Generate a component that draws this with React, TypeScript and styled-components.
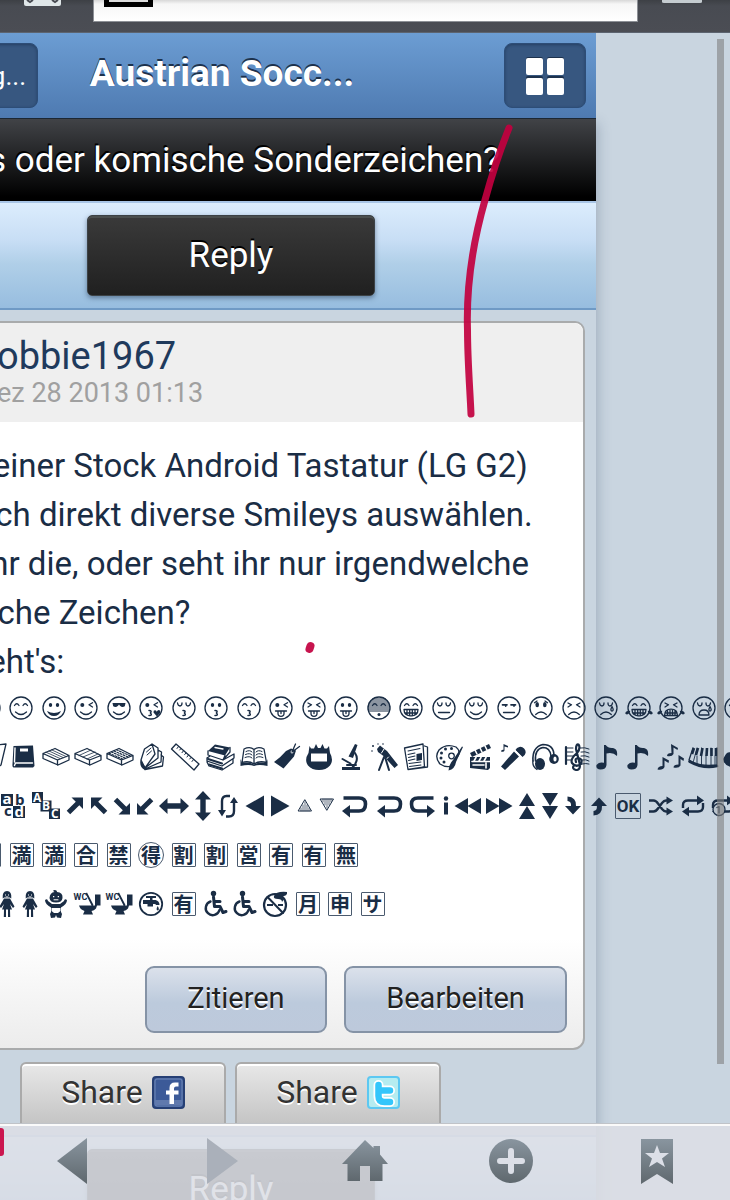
import React from 'react';
import styled, { createGlobalStyle } from 'styled-components';

const INK = '#1a2d45';

const Global = createGlobalStyle`
  * { box-sizing: border-box; }
  body { margin: 0; background: #c9d5e0; font-family: Roboto, "Noto Sans CJK JP", sans-serif; }
  button { font-family: inherit; cursor: pointer; }
`;

const Screen = styled.div`
  position: relative;
  height: 100vh;
  overflow: hidden;
  background: #c9d5e0;
`;

const BrowserBar = styled.div`
  display: flex;
  align-items: flex-start;
  height: 33px;
  padding: 0 28px 0 24px;
  background: linear-gradient(#3d4045, #484b52 6px, #4b4d54);
  border-bottom: 1px solid #5c6470;
`;

const BarGlyph = styled.svg`
  flex: none;
  display: block;
`;

const Address = styled.div`
  flex: 1;
  height: 22px;
  margin: 0 18px 0 32px;
  padding-left: 10px;
  background: linear-gradient(#d8d8d8, #f6f6f6 4px, #fff);
  border: 1px solid #8d9096;
  border-top: 0;
`;

const Forum = styled.main`
  margin-left: -134px;
  margin-right: 134px;
  box-shadow: 2px 90px 12px rgba(40, 60, 90, 0.25);
`;

const Header = styled.header`
  display: flex;
  align-items: flex-start;
  justify-content: space-between;
  height: 86px;
  padding: 10px 10px 0 0;
  background: linear-gradient(#6c9dd3, #4e7ab1);
  border-bottom: 1px solid #1c2733;
`;

const HeaderButton = styled.button<{ $width: number }>`
  display: flex;
  align-items: center;
  justify-content: flex-end;
  width: ${(p) => p.$width}px;
  height: 65px;
  padding: 0 11px 0 0;
  font-size: 26px;
  color: #fff;
  background: #375780;
  border: 1px solid #2d4d77;
  border-radius: 8px;
  box-shadow: inset 0 1px 3px rgba(15, 35, 65, 0.45);
`;

const GridButton = styled(HeaderButton)`
  justify-content: center;
  padding: 0;
`;

const Title = styled.h1`
  margin: 0 98px 0 0;
  font-size: 37px;
  line-height: 62px;
  font-weight: 700;
  color: #fff;
  text-shadow: 0 -2px 0 #1d324d;
`;

const Topic = styled.h2`
  margin: 0;
  padding: 2px 0 0 122px;
  height: 82px;
  font-size: 35px;
  line-height: 80px;
  font-weight: 400;
  color: #fff;
  white-space: nowrap;
  text-shadow: -1px -2px 0 #000;
  background: linear-gradient(#414347, #000 95%);
`;

const Strip = styled.div`
  display: flex;
  justify-content: center;
  height: 109px;
  padding-top: 12px;
  background: linear-gradient(#dcedfd, #c8def5 35%, #b0cfe8 58%, #97bddf);
  border-top: 2px solid #a8c5e6;
  border-bottom: 2px solid #6f9ac5;
`;

const ReplyButton = styled.button`
  width: 288px;
  height: 81px;
  padding: 0;
  font-size: 35px;
  color: #fff;
  text-shadow: 0 -2px 0 #000;
  background: linear-gradient(#3a3a3a, #202020);
  border: 1px solid #3c4246;
  border-radius: 5px;
  box-shadow: inset 0 2px 0 #4b4f4e, 0 2px 5px rgba(30, 50, 80, 0.5);
`;

const Post = styled.article`
  margin: 11px 11px 0 12px;
  border: 2px solid #a9abac;
  border-radius: 10px 10px 12px 10px;
  background: linear-gradient(#fff, #fff 85%, #ececec);
`;

const PostHead = styled.div`
  height: 99px;
  padding: 11px 0 0 117px;
  background: #efefef;
  border-radius: 9px 9px 0 0;
`;

const Author = styled.div`
  font-size: 38px;
  line-height: 44px;
  color: #1f3a5c;
`;

const PostDate = styled.div`
  font-size: 27px;
  line-height: 30px;
  color: #a0a0a0;
`;

const PostBody = styled.div`
  padding: 19px 0 0 28px;
  color: ${INK};
`;

const Line = styled.div`
  font-size: 33px;
  line-height: 49px;
  white-space: nowrap;
`;

const IconRow = styled.div<{ $start: number }>`
  display: flex;
  align-items: center;
  height: 49px;
  padding-bottom: 5px;
  margin-left: ${(p) => p.$start}px;
`;

const Cell = styled.span<{ $width: number }>`
  display: flex;
  flex: none;
  align-items: center;
  justify-content: center;
  width: ${(p) => p.$width}px;
`;

const Glyph = styled.svg`
  display: block;
  flex: none;
  width: 32px;
  height: 32px;
  overflow: visible;
`;

const Tile = styled.span<{ $round?: boolean }>`
  display: flex;
  flex: none;
  align-items: center;
  justify-content: center;
  width: ${(p) => (p.$round ? 26 : 24)}px;
  height: ${(p) => (p.$round ? 26 : 24)}px;
  border: 1px solid #4a5a6e;
  border-radius: ${(p) => (p.$round ? '50%' : '1px')};
  font-family: "Noto Sans CJK JP", sans-serif;
  font-size: 20px;
  line-height: 22px;
  font-weight: 700;
`;

const OkTile = styled(Tile)`
  width: 26px;
  height: 26px;
  font-family: Roboto, sans-serif;
  font-size: 17px;
`;

const Actions = styled.div`
  display: flex;
  justify-content: flex-end;
  gap: 17px;
  padding: 35px 16px 15px 0;
`;

const ActionButton = styled.button<{ $width: number }>`
  width: ${(p) => p.$width}px;
  height: 67px;
  padding: 0 0 3px;
  font-size: 29px;
  color: #222;
  text-shadow: 0 2px 0 #fff;
  background: linear-gradient(#dbe1eb, #bccadc 55%, #bdc9db);
  border: 2px solid #8593a6;
  border-radius: 9px;
`;

const Shares = styled.div`
  display: flex;
  justify-content: center;
  gap: 9px;
  padding: 12px 1px 11px 0;
`;

const ShareLink = styled.a`
  display: flex;
  align-items: center;
  justify-content: center;
  gap: 9px;
  width: 206px;
  height: 62px;
  padding-bottom: 4px;
  font-size: 32px;
  color: #333;
  text-decoration: none;
  text-shadow: 0 2px 0 #fff;
  background: linear-gradient(#e8e8e8, #c4c4c4);
  border: 2px solid #aaa;
  border-bottom: 0;
  border-radius: 6px 6px 0 0;
  box-shadow: inset 0 2px 0 #fff;
`;

const ScrollThumb = styled.div`
  position: absolute;
  top: 39px;
  right: 6px;
  bottom: 136px;
  width: 7px;
  background: rgba(128, 128, 128, 0.6);
`;

const Marks = styled.svg`
  position: absolute;
  top: 0;
  left: 0;
  overflow: visible;
  pointer-events: none;
`;

const Toolbar = styled.nav`
  position: absolute;
  left: 0;
  right: 0;
  bottom: 0;
  display: flex;
  height: 77px;
  background: rgba(220, 222, 229, 0.88);
  border-top: 1px solid #c0c3c8;
  box-shadow: inset 0 2px 0 #fafafa;
`;

const ToolButton = styled.button`
  display: flex;
  flex: 1;
  align-items: center;
  justify-content: center;
  padding: 0 0 2px;
  background: none;
  border: 0;
`;

/* ---------- smiley parts ---------- */

const S = { fill: 'none', stroke: 'currentColor', strokeWidth: 1.3, strokeLinecap: 'round' as const, strokeLinejoin: 'round' as const };
const F = { fill: 'currentColor', stroke: 'none' };

const EYES: Record<string, React.ReactNode> = {
  arc: <path d="M-6.5 -2.5Q-4.2 -6 -2 -2.5M2 -2.5Q4.2 -6 6.5 -2.5" />,
  dots: <g {...F}><ellipse cx="-3.5" cy="-3" rx="1.7" ry="2.1" /><ellipse cx="3.5" cy="-3" rx="1.7" ry="2.1" /></g>,
  wink: <><circle {...F} cx="-3.7" cy="-3" r="2" /><path d="M6.5 -5.3L3 -3.2L6.5 -1" /></>,
  shades: <path {...F} d="M-6.5 -5H6.5L5.8 -1.8Q3.3 0 1 -2.3L0 -3.5L-1 -2.3Q-3.3 0 -5.8 -1.8Z" />,
  closed: <path d="M-6.5 -5Q-6 -2 -4 -2Q-2 -2 -2 -5M2 -5Q2 -2 4 -2Q6 -2 6.5 -5" />,
  squint: <path d="M-6 -5L-2.5 -3.2L-6 -1M6 -5L2.5 -3.2L6 -1" />,
  flat: <path strokeWidth="1.7" d="M-6.5 -3.2H-2M2 -3.2H6.5M-3.3 -2.5V-1.9M5 -2.5V-1.9" />,
  sad: <><path d="M-6.5 -5.3L-4 -7M6.5 -5.3L4 -7" /><g {...F}><ellipse cx="-3.8" cy="-3.3" rx="1.8" ry="2.6" /><ellipse cx="3.8" cy="-3.3" rx="1.8" ry="2.6" /></g></>,
};

const MOUTHS: Record<string, React.ReactNode> = {
  smile: <path d="M-5.5 4Q0 9 5.5 4" />,
  bigSmile: <path {...F} d="M-7 3Q0 7 7 3Q5 8 0 8Q-5 8 -7 3Z" />,
  kiss: <path strokeWidth="1.5" d="M-1 2.6Q2.4 2.6 0.4 4.9Q2.9 7.6 -1 7.6" />,
  tongue: <path d="M-5.5 3H5.5M-3 3V5.5Q-3 8.3 0 8.3Q3 8.3 3 5.5V3M0 3V5.5" />,
  teeth: <path d="M-7 1.5H7Q7 7.8 0 7.8Q-7 7.8 -7 1.5ZM-4 1.7V6.5M-1.3 1.7V7.8M1.3 1.7V7.8M4 1.7V6.5M-6 5H6" />,
  line: <path d="M-5.5 4.5H5.5" />,
  frown: <path d="M-5.3 6.5Q0 1.5 5.3 6.5" />,
  wail: <path d="M-5 7Q-5 2 0 2Q5 2 5 7Z" />,
  wailTeeth: <path d="M-6.5 7.5Q-6.5 1.2 0 1.2Q6.5 1.2 6.5 7.5ZM-3.5 2.5V7.5M-1 1.3V7.5M1.5 1.3V7.5M4 2.5V7.5M-6 5H6" />,
};

const EXTRAS: Record<string, React.ReactNode> = {
  heart: <path {...F} d="M6 8.5L2.5 4.5Q2.3 2 4.2 2.2Q5.4 2.4 5.7 3.8Q6.8 1.4 8.6 2.2Q10 3.2 8.9 5.2Z" />,
  tear: <path d="M6 -1.5Q3.8 2.5 6 3.2Q8.4 2.6 6 -1.5Z" />,
  drops: <path fill="currentColor" d="M-9.5 3.5Q-13 3.5 -13 5.5Q-11 6.5 -9.5 3.5ZM9.5 3.5Q13 3.5 13 5.5Q11 6.5 9.5 3.5Z" />,
  shade: <><path strokeWidth="1" d="M-6.5 -9H6.5M-8.5 -7H8.5M-10 -5H10M-10.5 -3H10.5M-11 -1H11M-11 1H11M-10.5 3H10.5" /><circle {...F} cy="6.5" r="1.5" /></>,
};

const Face = ({ eyes, mouth, extra }: { eyes?: string; mouth?: string; extra?: string }) => (
  <Glyph viewBox="-16 -16 32 32" aria-hidden="true">
    <g {...S}>
      <circle r="11" />
      {eyes && EYES[eyes]}
      {mouth && (extra === 'heart' ? <g transform="translate(-1 0)">{MOUTHS[mouth]}</g> : MOUTHS[mouth])}
      {extra && EXTRAS[extra]}
    </g>
  </Glyph>
);

const FACES: Array<[string?, string?, string?]> = [
  [], ['arc', 'smile'], ['dots', 'bigSmile'], ['wink', 'smile'], ['shades', 'smile'], ['wink', 'kiss', 'heart'],
  ['closed', 'kiss'], ['dots', 'kiss'], ['arc', 'kiss'], ['wink', 'tongue'], ['squint', 'tongue'], ['dots', 'tongue'],
  ['arc', undefined, 'shade'], ['arc', 'teeth'], ['closed', 'line'], ['closed', 'smile'], ['flat', 'line'], ['sad', 'frown'],
  ['squint', 'frown'], ['closed', 'frown', 'tear'], ['arc', 'teeth', 'drops'], ['squint', 'wailTeeth', 'drops'],
  ['closed', 'wail', 'tear'], ['arc', 'smile'],
];

/* ---------- object and symbol drawings ---------- */

const eraserBody = 'M-13 -3.5L-1 -8.5L13 -1.5V3L2 8L-13 1.5ZM-13 -3.5L1.5 3L13 -1.5M1.5 3V8';
const girl = (
  <g {...F}>
    <path d="M-4.3 -5.5Q-5 -13 0 -13Q5 -13 4.3 -5.5L2.8 -6.5H-2.8Z" />
    <path d="M-3 -5.5H3L7.5 2.5L6 4L3 0L5 5.5H-5L-3 0L-6 4L-7.5 2.5ZM-3 5.5H-1V13H-3.2ZM1 5.5H3L3.2 13H1Z" />
    <path fill="#fff" d="M-2 -9.5H-1V-8.5H-2ZM1 -9.5H2V-8.5H1ZM-1.3 -7.4H1.3V-6.8H-1.3Z" />
  </g>
);
const toilet = (
  <g {...F}>
    <text x="-13.5" y="-4" fontSize="9" fontWeight="700" fontFamily="Roboto, sans-serif">WC</text>
    <path d="M0 -11.5L6.5 1L4.8 2L-1.5 -10.5ZM8 -9.5H13.5V1.5H10L9 4.500Q7 6.500 4.500 7L6 10.500H-4L-2.500 7Q-7 5.500 -8 1.500H8Z" />
  </g>
);
const wheelchair = (
  <g>
    <circle {...F} cx="-1.5" cy="-10.5" r="2.7" />
    <path strokeWidth="3" d="M-1.5 -7L-0.5 2.5H5L8 8.5L11 7.5M-1 -2.5H5" />
    <path strokeWidth="2.4" d="M-4.5 -2.5A7 7 0 1 0 4.5 6" />
  </g>
);
const note = <path {...F} d="M-3 -12H-1.3Q1 -8.5 6 -9Q11 -8 10 -1Q6 -5 -0.5 -3.5V8Q-1 12.5 -6.5 12.5Q-11.5 12 -10.5 8Q-8.5 4.5 -3 5.8Z" />;
const diag = <path {...F} d="M8 -8.5V3L4.3 -0.8L-4.8 8.3L-8.3 4.8L0.8 -4.3L-3.5 -8.5Z" />;
const hook = <path strokeWidth="3.6" strokeLinecap="butt" d="M-11.5 -8H4Q10.5 -8 10.5 -2Q10.5 5 4 5H-5" />;
const hookHead = <path {...F} d="M-13 5L-5 -1V11.5Z" />;
const loopArrows = (
  <>
    <path strokeWidth="2.4" strokeLinecap="butt" d="M-10 2V-1Q-10 -5.5 -5 -5.5H5M10 -3V1Q10 5.5 5 5.5H-5" />
    <path {...F} d="M4 -10.5L11 -5.5L4 -0.7ZM-4 10.5L-11 5.5L-4 0.7Z" />
  </>
);

const ART: Record<string, React.ReactNode> = {
  pen: <path d="M5 -12L14 -13L9 8L3 12" />,
  book: <><path {...F} d="M-10.5 -11L9 -11.5L10.5 9L9 10.5H-10.5Q-12 10 -11.5 7Z" /><path stroke="#fff" strokeWidth="1.4" d="M-9.5 8.5L-8.5 6H8.5M-9 -9L-9.5 5" /><path fill="#fff" stroke="none" d="M-4 -8.5H4V-5.5H-4Z" /></>,
  eraser: <><path d={eraserBody} /><path strokeWidth="0.8" d="M-10 -4.8L4 1.5M-7 -6L7 0.5M-4.5 -7.2L10 -0.5" /></>,
  eraser2: <><path d={eraserBody} /><path strokeWidth="0.8" d="M-9 -1.5L3 -7M-5 0L7 -5M-1 2L10 -3" /></>,
  eraser3: <><path d={eraserBody} /><path strokeWidth="1.2" strokeDasharray="1.8 1.5" d="M-11 -3.8L2.5 2M-8.5 -5L5 1M-6 -6L8 0M-3.5 -7.2L10.5 -1" /></>,
  pages: <><path d="M-11 3L-7.5 -8L0 -13L3 -3L-7 11ZM0 -13L6 -9L6 1L-7 11M6 -7L9.5 -5L9 5L-7 12M9 -2L11.5 0L10.5 9L-7 12.5" /><path strokeWidth="1" d="M-5.5 -5L-1 -9M-5 -2L-0.5 -6" /><path {...F} d="M-11.5 3L-6 11L-7 13Q-13 10 -11.5 3Z" /></>,
  ruler: <><path d="M-9 -13L14 7L9 13L-13.5 -8Z" /><path strokeWidth="1" d="M-6.5 -10.5L-8 -8.5M-4 -8.5L-5.3 -7M-1.5 -6.2L-3 -4.3M1 -4L-0.3 -2.5M3.5 -2L2 0M6 0.5L4.7 2M8.5 2.5L7 4.5" /></>,
  books: <><path {...F} d="M-12 -6L-5 -12.5L10 -9.5L5 -1.5Z" /><path d="M-12 -6V-2L3 3L5 -1.5M10 -9.5V-5L3 3M-13 1L-10 -1M-13 1V4L2 9L14 1V-3L3 3M-13 5L-11 9L2 13L13 6V2" /><path strokeWidth="2" d="M-12 2L2 6.5M-11 7.5L2 11.5" /><path stroke="#fff" d="M-5 -9.5L3 -8" /></>,
  openBook: <><path d="M-12 5.5L-10 -8Q-4 -11 0 -7.5Q4 -11 10 -8L12.5 5.5Q5 3.5 0 7Q-5 3.5 -12 5.5ZM0 -7.5V7" /><path strokeWidth="1" d="M-8 -5.5Q-4 -7.5 -2 -5M-8.5 -2.5Q-4 -4.5 -2 -2M-9 0.5Q-4 -1.5 -2 1M8 -5.5Q4 -7.5 2 -5M8.5 -2.5Q4 -4.5 2 -2M9 0.5Q4 -1.5 2 1" /><path {...F} d="M-13.5 2L-12 6Q-5 4.5 0 7.5Q5 4.5 12.5 6L13.5 2V9Q5 7 0 9Q-5 7 -13.5 9Z" /></>,
  tag: <><path {...F} d="M4 -8.5L9 -6.5L7 -0.5L-3.5 11.5L-13 5Q-6 0 -1 -6Z" /><circle cx="5" cy="-5" r="1.4" fill="#fff" stroke="none" /><path d="M5 -5L8.5 -13M5 -5L12.5 -10.5" /></>,
  badge: <><path {...F} d="M-10.5 -4L-9.5 -11L-8 -8.5H-5L-3 -13L-1 -9H1.5L3.5 -13L5.5 -8.5H8L10 -11L11 -4Q15 3 11 8.5Q7 13 0 13Q-7 13 -11 8.5Q-15 3 -10.5 -4Z" /><path fill="#fff" stroke="none" d="M-8 -3.5H8V4.5H-8Z" /></>,
  microscope: <><path {...F} d="M4 -13L6.5 -12L2 1L-2.5 -0.5ZM-9 10H9V13H-9Z" /><path strokeWidth="2" d="M4 -4Q8 2 3.5 8L1 11M-8.5 2L-0.5 6.5M-4 8L5 8" /></>,
  telescope: <><path {...F} d="M-7 -8L-4 -11.5L1 -7.5L3 -6L14 8L10.5 11L-0.5 -1L-6 -5Z" /><path stroke="#fff" strokeWidth="1" d="M0 -8L-2.5 -4M4.5 0L1.5 3" /><path strokeWidth="2" d="M0 0L-5 13M1.5 1.5L5 13" /><g {...F}><circle cx="-12" cy="-6" r="0.8" /><circle cx="-11" cy="-11" r="1" /><circle cx="-6" cy="-13" r="0.7" /><circle cx="-1" cy="-13" r="0.8" /></g></>,
  newspaper: <><path d="M-11.5 -9L7 -13L8.5 10L-8 12.5ZM8.5 -11L11.5 -10L11.5 10L-8 12.5" /><path strokeWidth="1.1" d="M-8 -6L4 -8.5M-8 -2.5L-1 -4M-7.5 0.5L-1 -1M-7.5 3.5L-1 2M-7 6.5L5 5M-6.5 9.5L5 8" /><path {...F} d="M0.5 -3L6 -4V3L0.5 4Z" /></>,
  palette: <><path d="M3 9Q-3 11 -9 7Q-15 0 -10 -7Q-3 -14 7 -10Q12 -6 9 -1" /><circle cx="2.5" cy="-1" r="2.8" /><g {...F}><circle cx="-7.5" cy="-4" r="1.5" /><circle cx="-3.5" cy="-8" r="1.5" /><circle cx="2.5" cy="-8.5" r="1.5" /><circle cx="-8" cy="1" r="1.5" /><circle cx="-5" cy="5" r="1.5" /><path d="M14 -10L7 5Q6 12 -0.5 13.5Q0 7 4 3L13 -10.5Z" /></g></>,
  clapper: <><path {...F} d="M-11 -4L8 -13L10 -9L-9 0ZM-11 0H9V11L7 13L-11 11Z" /><path stroke="#fff" strokeWidth="1.6" d="M-6 -7L-4 -3M-1 -9L1 -5M4 -11L6 -7M-7 4L-5 0.5M-2 4L0 0.5M3 4L5 0.5M-9 4.5H9M-8 8H3M5 6V11" /></>,
  mic: <><path {...F} d="M-12 9.5L1 -5.5L6 -0.5L-8 13ZM2.5 -7A5.3 5.3 0 1 1 9.5 0ZM-9.5 -13L-5 -11V-9.5L-8.5 -10.5V-6.5Q-9 -4.5 -12 -5.5Q-12 -7.5 -9.5 -7.2Z" /><path stroke="#fff" strokeWidth="1" d="M2 -7L8.5 0" /></>,
  headphones: <><path strokeWidth="1.6" d="M-12 4Q-13 -10 -2 -12.5Q9 -12.5 9 -1M-9.5 4Q-10.5 -8 -2 -9.5Q5 -9.5 6 -1" /><ellipse {...F} cx="9" cy="2" rx="4.8" ry="5" /><ellipse {...F} cx="-5" cy="7" rx="5" ry="6" /><path d="M-12 4Q-13 9 -8 12.5" /><ellipse fill="#fff" stroke="none" cx="10" cy="2" rx="1.6" ry="2.5" /></>,
  score: <><path strokeWidth="1" d="M-11.5 -9H-4M-11.5 -5H-4M-11.5 -1H-4M-11.5 3H-6M3 -9Q8 -10 12 -8M4 -5Q8 -6 12 -4M4 -1Q8 -2 12 0M5 3Q9 2 12 4M5 7Q9 6 12 7" /><path strokeWidth="2.2" d="M-11 -10V7M-1 13Q-5 12 -3.5 9M0 13Q4 12 2.5 6L-1 -8Q-1 -13 1.5 -12.5Q4 -9 0 -4Q-7 2 -5 6Q-1 11 4 7Q6 2 1.5 1Q-2.5 1 -1 5" /></>,
  note,
  notes: <g {...F}><path d="M1 -13L8 -9L7.5 -7L3.5 -9.5V-3Q2 0 -3 -1Q-3 -4 1.5 -4ZM-7.5 0L-1 3.5L-1.5 6L-5.5 3.5V10Q-7 13.5 -12.5 12.5Q-12 9 -7.5 9ZM8.5 -2L14 1.5L13.5 4L10.5 2V8.5Q9 11.5 3.5 10.5Q3.5 7.5 8.5 7.5Z" /></g>,
  piano: <><path d="M-10 -9L-14 3Q-5 10 14 8V-9" /><path strokeWidth="2.6" d="M-13.5 4.5Q0 12 14 9" /><path strokeWidth="0.9" d="M-10 6L-6 -9M-6 7V-1M-1.5 8V-9M3 9V-1M8 9V-9M12 9V-1" /><path strokeWidth="2.6" strokeLinecap="butt" d="M-9 -9L-11 -3M-5 -9L-7 -2M-0.5 -9L-2 -1M4 -9L3.5 -1M8.5 -9V-1M13 -9V-1" /></>,
  bomb: <path {...F} d="M-9 -3Q-7 -6 -3 -4L0 -7L3 -5Q12 -6 12 3Q10 11 1 11Q-11 10 -12 2Z" />,
  abcd: <g {...F}><path d="M-12 -12H0V0H-12ZM0 0H12V12H0Z" /><g fontFamily="Open Sans, sans-serif" fontWeight="700" fontSize="15"><text x="-10.5" y="-2" fill="#fff">a</text><text x="2" y="-1">b</text><text x="-9" y="10">c</text><text x="1.5" y="11" fill="#fff">d</text></g></g>,
  blocks: <g {...F}><path d="M-14 -14H-3V-3H-14ZM-5.5 -5.5H5.5V5.5H-5.5ZM3 2.5H14V13H3Z" /><g fill="#fff" fontFamily="Open Sans, sans-serif" fontWeight="700" fontSize="12"><text x="-13" y="-4">A</text><text x="-4" y="4">B</text><text x="5" y="12">C</text></g></g>,
  ne: diag,
  nw: <g transform="scale(-1 1)">{diag}</g>,
  se: <g transform="scale(1 -1)">{diag}</g>,
  sw: <g transform="scale(-1 -1)">{diag}</g>,
  lr: <path {...F} d="M-15 0L-6.5 -8V-2.7H6.5V-8L15 0L6.5 8V2.7H-6.5V8Z" />,
  ud: <path {...F} d="M0 -15L8 -6.5H2.7V6.5H8L0 15L-8 6.5H-2.7V-6.5H-8Z" />,
  loop: <><path strokeWidth="2.4" strokeLinecap="butt" d="M-6 6V-5Q-6 -10 -1.5 -10H2M-2 10.500H1Q6 10.500 6 5V-4" /><path {...F} d="M-10 4H-2L-6 10.500ZM2 -3L6 -9L10 -3Z" /></>,
  left: <path {...F} d="M9 -10.5V10.5L-9.5 0Z" />,
  right: <path {...F} d="M-9 -10.5V10.5L9.5 0Z" />,
  up: <><path strokeWidth="1" d="M0 -6L6.5 5H-6.5Z" /><path strokeWidth="0.7" d="M-4 2V5M-2 -1V5M0 -4V5M2 -1V5M4 2V5" /></>,
  down: <><path strokeWidth="1" d="M0 4L6.5 -7H-6.5Z" /><path strokeWidth="0.7" d="M-4 -4V-7M-2 -1V-7M0 2V-7M2 -1V-7M4 -4V-7" /></>,
  hookL: <>{hook}{hookHead}</>,
  hookR: <g transform="scale(-1 1)">{hook}{hookHead}</g>,
  info: <g {...F}><circle cy="-7.5" r="2.2" /><path d="M-2 -3.5H2V8.5H-2Z" /></g>,
  rewind: <path {...F} d="M0 -8V8L-13.5 0ZM13 -8V8L-0.5 0Z" />,
  forward: <path {...F} d="M0 -8V8L13.5 0ZM-13 -8V8L0.5 0Z" />,
  fastUp: <path {...F} d="M0 -13L8 0H-8ZM0 0L8 13H-8Z" />,
  fastDown: <path {...F} d="M0 13L8 0H-8ZM0 0L8 -13H-8Z" />,
  curveDown: <path {...F} d="M-5.5 -9.5Q3.5 -9 3 0H8L0 8.5L-8 0H-2Q-1.5 -4.5 -5.5 -5Z" />,
  curveUp: <path {...F} d="M-5.5 9.5Q3.5 9 3 0H8L0 -8.5L-8 0H-2Q-1.5 4.5 -5.5 5Z" />,
  shuffle: <><path strokeWidth="2.4" strokeLinecap="butt" d="M-12 -5.5H-7.5Q-5 -5.5 -3 -2.5L1 3Q3 5.5 5 5.5H7M-12 5.5H-7.5Q-5 5.5 -3 2.5L1 -3Q3 -5.5 5 -5.5H7" /><path {...F} d="M5.5 -9.5L12 -5.5L5.5 -1.5ZM5.5 1.5L12 5.5L5.5 9.5Z" /></>,
  repeat: loopArrows,
  repeatOne: <>{loopArrows}<circle cx="-4" cy="3.5" r="6" fill="#b9c3cc" /><path d="M-6 1.5L-4 0.5V7" /></>,
  girl,
  baby: <><path {...F} d="M-6.5 -6Q-6 -11.5 -1.5 -12Q-4.5 -13.5 -1 -14Q1.5 -13.5 1 -12Q7 -11.5 6.5 -6Q6 -1.5 0 -1.5Q-6 -1.5 -6.5 -6ZM-11 -4Q-8.5 -6 -8 -3L-4 0H4L8 -3Q8.5 -6 11 -4Q11 0 5 3.5V8L6 10L5 14L1 13.5L0 11L-1 13.5L-5 14L-6 10L-5 8V3.5Q-11 0 -11 -4Z" /><path fill="#fff" stroke="none" d="M-4.5 4H4.5V7L2 9H-2L-4.5 7ZM-3 -8H-1.7V-6.7H-3ZM1.7 -8H3V-6.7H1.7Z" /><path stroke="#fff" strokeWidth="1" d="M-2 -4.2H2" /></>,
  toilet,
  tap: <><circle r="11.2" strokeWidth="1.8" /><path {...F} d="M-1 -4V-6H1.5V-4H4.5Q8.5 -3 8.5 1H5Q5 0 3.5 0H2V2.5H-3.5V0H-8V-4ZM-5 -8H5V-6H-5Z" /><path {...F} d="M6.7 2Q9 6 6.7 6.5Q4.5 6 6.7 2Z" /></>,
  wheelchair,
  noSmoke: <><circle r="11" strokeWidth="2.2" cy="1" /><path strokeWidth="2" d="M-7.5 -7L8 9" /><path strokeWidth="2.2" strokeLinecap="butt" d="M-8 1H-2M3 1H8" /><path {...F} d="M-1 -8Q1 -13 12 -12Q13 -8 6 -7.5Q10 -5 7 -2Q7 -5 3 -5Q-2 -5 -1 -8Z" /></>,
};

const Art = ({ name }: { name: string }) => (
  <Glyph viewBox="-16 -16 32 32" aria-hidden="true"><g {...S}>{ART[name]}</g></Glyph>
);

type Item = [string, number];

const OBJECTS: Item[] = [
  ['pen', 32], ['book', 32], ['eraser', 32], ['eraser2', 32], ['eraser3', 32], ['pages', 32], ['ruler', 34], ['books', 35],
  ['openBook', 33], ['tag', 33], ['badge', 32], ['microscope', 32], ['telescope', 33], ['newspaper', 32], ['palette', 33],
  ['clapper', 32], ['mic', 31], ['headphones', 33], ['score', 31], ['note', 30], ['note', 31], ['notes', 33], ['piano', 33], ['bomb', 32],
];

const SYMBOLS: Item[] = [
  ['abcd', 32], ['blocks', 34], ['ne', 24], ['nw', 23], ['se', 24], ['sw', 22], ['lr', 36], ['ud', 22], ['loop', 28],
  ['left', 26], ['right', 24], ['up', 25], ['down', 20], ['hookL', 36], ['hookL', 33], ['hookR', 32], ['info', 15],
  ['rewind', 29], ['forward', 33], ['fastUp', 23], ['fastDown', 23], ['curveDown', 24], ['curveUp', 27], ['=OK', 32],
  ['shuffle', 33], ['repeat', 31], ['repeatOne', 30],
];

const SIGNS: Item[] = [
  ['=満', 32], ['=満', 33], ['=満', 32], ['=合', 32], ['=禁', 33], ['@得', 32], ['=割', 33], ['=割', 32], ['=営', 33],
  ['=有', 32], ['=有', 33], ['=無', 32],
];

const PEOPLE: Item[] = [
  ['girl', 22], ['girl', 23], ['baby', 29], ['toilet', 33], ['toilet', 32], ['tap', 32], ['=有', 33], ['wheelchair', 30],
  ['wheelchair', 28], ['noSmoke', 34], ['=月', 32], ['=申', 32], ['=サ', 33],
];

/* "=" marks a boxed character, "@" a circled one, anything else is a drawing. */
const Symbol = ({ name }: { name: string }) => {
  if (name === '=OK') return <OkTile>OK</OkTile>;
  if (name[0] === '=') return <Tile>{name.slice(1)}</Tile>;
  if (name[0] === '@') return <Tile $round>{name.slice(1)}</Tile>;
  return <Art name={name} />;
};

const SymbolRow = ({ start, items }: { start: number; items: Item[] }) => (
  <IconRow $start={start}>
    {items.map(([name, width], i) => (
      <Cell key={i} $width={width}><Symbol name={name} /></Cell>
    ))}
  </IconRow>
);

const LINES = [
  'Mit meiner Stock Android Tastatur (LG G2)',
  'kann ich direkt diverse Smileys auswählen.',
  'Seht ihr die, oder seht ihr nur irgendwelche',
  'komische Zeichen?',
  "Los geht's:",
];

const ToolGradient = () => (
  <defs>
    <linearGradient id="steel" x1="0" y1="0" x2="0" y2="1">
      <stop offset="0" stopColor="#89959f" />
      <stop offset="1" stopColor="#5f686e" />
    </linearGradient>
  </defs>
);

export default function App() {
  return (
    <Screen>
      <Global />
      <BrowserBar>
        <BarGlyph width="37" height="7" viewBox="0 0 37 7"><path d="M0 0H37V4Q37 6 35 6H2Q0 6 0 4Z" fill="#dfe6e8" /><path d="M3 0L6 2L9 0M28 0L31 2L34 0" stroke="#484b52" strokeWidth="2" fill="none" /></BarGlyph>
        <Address><BarGlyph width="49" height="7" viewBox="0 0 49 7"><path d="M0 0H49V7H0Z" fill="#000" /><path d="M5 0H44V2H5Z" fill="#ddd" /></BarGlyph></Address>
        <BarGlyph width="46" height="4" viewBox="0 0 46 4"><path d="M6 0H46V2Q46 3 44 3H8Q6 3 6 2Z" fill="#c5ccd0" /></BarGlyph>
      </BrowserBar>

      <Forum>
        <Header>
          <HeaderButton $width={172} type="button">g...</HeaderButton>
          <Title>Austrian Socc...</Title>
          <GridButton $width={82} type="button" aria-label="Menu">
            <svg width="38" height="40" viewBox="0 -2 38 40">
              <g fill="#1d324d"><rect x="0" y="-1" width="17" height="17" rx="2" /><rect x="21" y="-1" width="17" height="17" rx="2" /><rect y="18" width="17" height="17" rx="2" /><rect x="21" y="18" width="17" height="17" rx="2" /></g>
              <g fill="#fff"><rect width="17" height="17" rx="2" /><rect x="21" width="17" height="17" rx="2" /><rect y="20" width="17" height="17" rx="2" /><rect x="21" y="20" width="17" height="17" rx="2" /></g>
            </svg>
          </GridButton>
        </Header>
        <Topic>s oder komische Sonderzeichen?</Topic>
        <Strip><ReplyButton type="button">Reply</ReplyButton></Strip>

        <Post>
          <PostHead>
            <Author>obbie1967</Author>
            <PostDate>ez 28 2013 01:13</PostDate>
          </PostHead>
          <PostBody>
            {LINES.map((line) => <Line key={line}>{line}</Line>)}
            <IconRow $start={64}>
              {FACES.map(([eyes, mouth, extra], i) => (
                <Cell key={i} $width={i % 2 ? 32 : 33}><Face eyes={eyes} mouth={mouth} extra={extra} /></Cell>
              ))}
            </IconRow>
            <SymbolRow start={68} items={OBJECTS} />
            <SymbolRow start={89} items={SYMBOLS} />
            <SymbolRow start={65} items={SIGNS} />
            <SymbolRow start={88} items={PEOPLE} />
          </PostBody>
          <Actions>
            <ActionButton $width={182} type="button">Zitieren</ActionButton>
            <ActionButton $width={223} type="button">Bearbeiten</ActionButton>
          </Actions>
        </Post>

        <Shares>
          <ShareLink href="#facebook">
            Share
            <svg width="33" height="33" viewBox="0 0 33 33" aria-label="Facebook"><rect x="1" y="1" width="31" height="31" rx="3" fill="#3c5a98" stroke="#263f74" strokeWidth="2" /><rect x="3" y="3" width="27" height="27" rx="2" fill="none" stroke="#7189b7" /><path d="M3 24H30V29H3Z" fill="#6079ad" /><path d="M17.5 28V18.5H14V14.5H17.5V12Q17.5 6.5 23 6.5H26.5V10.5H24Q22 10.5 22 12.5V14.5H26.5V18.5H22V28Z" fill="#fff" /></svg>
          </ShareLink>
          <ShareLink href="#twitter">
            Share
            <svg width="33" height="33" viewBox="0 0 33 33" aria-label="Twitter"><rect x="1" y="1" width="31" height="31" rx="3" fill="#b5ecf0" stroke="#5cc8f2" strokeWidth="2" /><path d="M11.5 9V20Q11.5 26 17.5 26H23M11.5 14.5H23" fill="none" stroke="#fff" strokeWidth="10" strokeLinecap="round" strokeLinejoin="round" /><path d="M11.5 9V20Q11.5 26 17.5 26H23M11.5 14.5H23" fill="none" stroke="#33c6fb" strokeWidth="6.5" strokeLinecap="round" strokeLinejoin="round" /></svg>
          </ShareLink>
        </Shares>
        <Strip><ReplyButton type="button">Reply</ReplyButton></Strip>
      </Forum>

      <ScrollThumb />

      <Toolbar>
        <ToolButton type="button" aria-label="Back">
          <svg width="32" height="48" viewBox="0 0 32 48"><ToolGradient /><path d="M30 1V47L0 24Z" fill="url(#steel)" /></svg>
        </ToolButton>
        <ToolButton type="button" aria-label="Forward">
          <svg width="38" height="48" viewBox="0 0 38 48"><path d="M7 1V47L38 24Z" fill="#aab0ba" /></svg>
        </ToolButton>
        <ToolButton type="button" aria-label="Home">
          <svg width="46" height="42" viewBox="0 0 46 42"><path d="M23 0L31.5 8V6H38V14.5L46 24H40.5V41H28V26H18V41H5.5V24H0Z" fill="url(#steel)" /></svg>
        </ToolButton>
        <ToolButton type="button" aria-label="Add">
          <svg width="44" height="44" viewBox="0 0 44 44"><circle cx="22" cy="22" r="22" fill="url(#steel)" /><path d="M22 12V32M11 22H33" stroke="#dcdfe7" strokeWidth="6" strokeLinecap="round" /></svg>
        </ToolButton>
        <ToolButton type="button" aria-label="Bookmarks">
          <svg width="32" height="45" viewBox="0 0 32 45"><path d="M0 0H32V45L16 35L0 45Z" fill="url(#steel)" /><path d="M16 6L19 14H28L21 19.5L24 28L16 23L8 28L11 19.5L4 14H13Z" fill="#dcdfe7" /></svg>
        </ToolButton>
      </Toolbar>

      <Marks width="1" height="1" aria-hidden="true">
        <g fill="none" stroke="#c2003f" strokeOpacity="0.92" strokeLinecap="round">
          <path strokeWidth="7" d="M509 128C500 150 491 178 485 200C475 235 466 282 467.5 330C467.5 360 470 390 471 414" />
          <path strokeWidth="8" d="M309.5 649L310.5 646" />
        </g>
        <rect x="-8" y="1128" width="12" height="28" rx="3" fill="#cb164f" />
      </Marks>
    </Screen>
  );
}
